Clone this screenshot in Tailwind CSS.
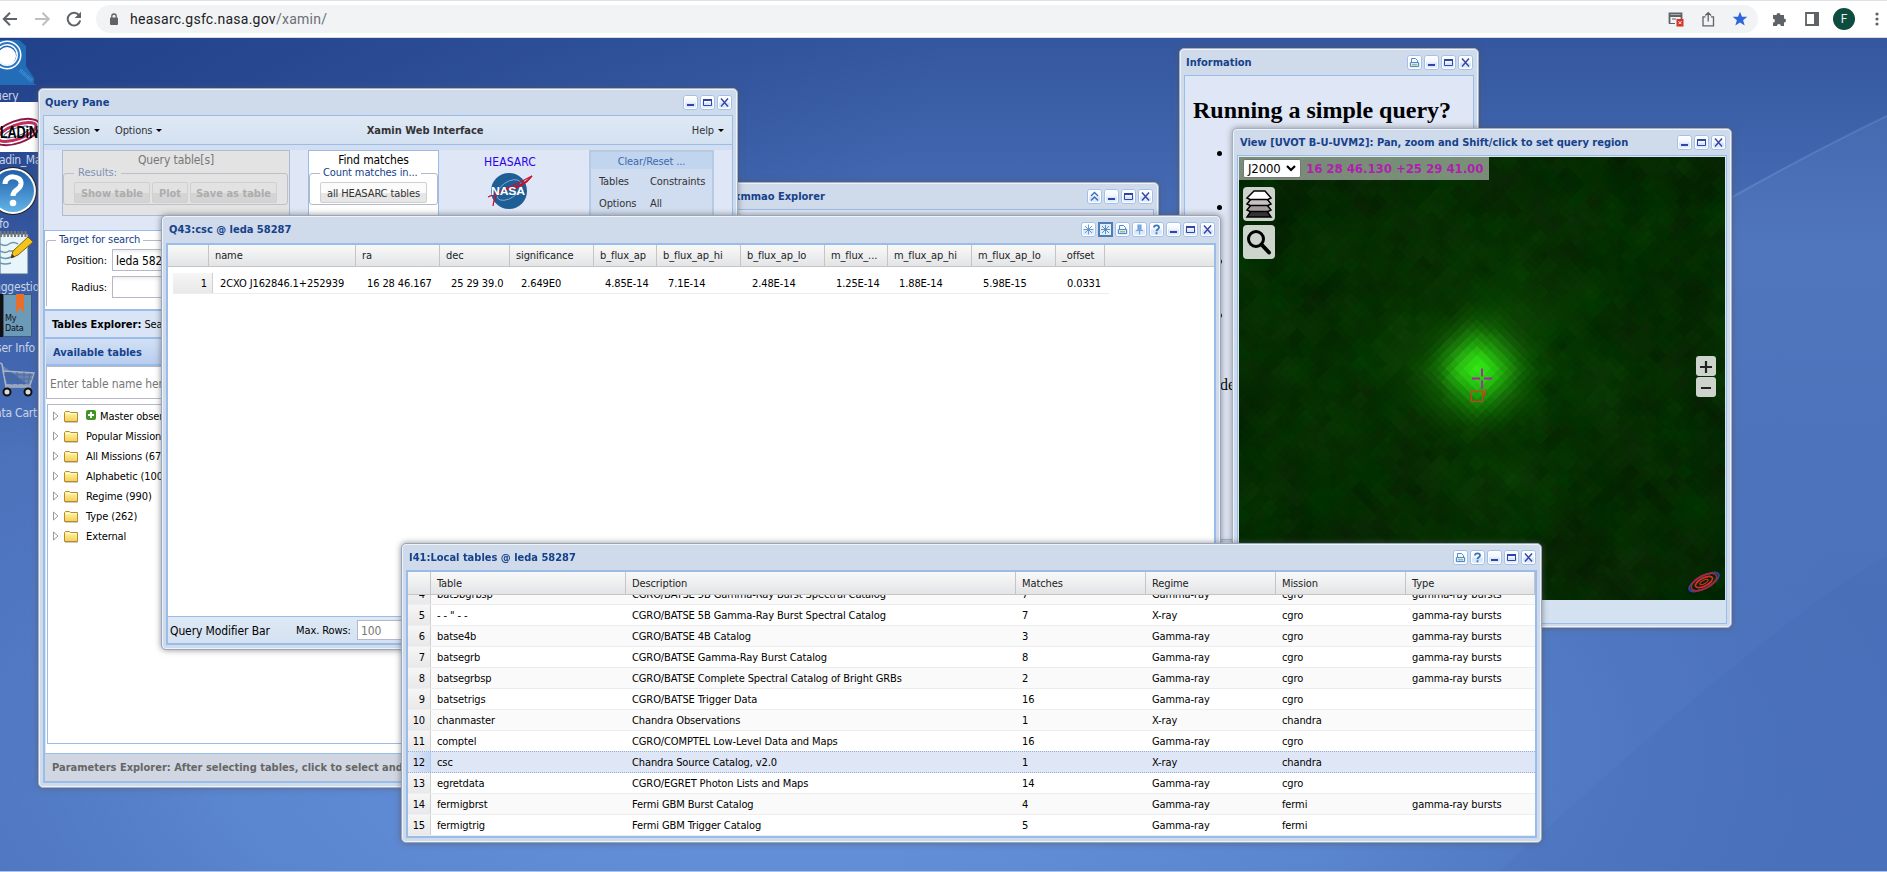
<!DOCTYPE html>
<html lang="en">
<head>
<meta charset="utf-8">
<title>Xamin</title>
<script src="https://cdn.jsdelivr.net/npm/@tailwindcss/browser@4"></script>
</head>
<body class="w-[1887px] h-[872px] overflow-hidden relative font-['DejaVu_Sans_Condensed','DejaVu_Sans',sans-serif] text-[11px] leading-[14px] tracking-[-0.11px] text-black whitespace-nowrap">
<svg class="absolute w-0 h-0">
  <linearGradient id="bt" x1="0" y1="0" x2="0" y2="1"><stop offset="0" stop-color="#fff"/><stop offset=".45" stop-color="#f2f7fe"/><stop offset=".6" stop-color="#d3e4fa"/><stop offset="1" stop-color="#eaf3ff"/></linearGradient>
  <linearGradient id="fg" x1="0" y1="0" x2="0" y2="1"><stop offset="0" stop-color="#fff7a8"/><stop offset="1" stop-color="#f3cf58"/></linearGradient>
  <linearGradient id="ig" x1="0" y1="0" x2="0" y2="1"><stop offset="0" stop-color="#1d5ea8"/><stop offset="1" stop-color="#63b3e8"/></linearGradient>
  <symbol id="box" viewBox="0 0 15 15"><rect x=".5" y=".5" width="14" height="14" rx="2.5" fill="url(#bt)" stroke="#a3c0ea"/><rect x="1.5" y="1.5" width="12" height="12" rx="1.5" fill="none" stroke="#fff"/></symbol>
  <symbol id="min" viewBox="0 0 15 15"><use href="#box"/><path d="M4 10h7" stroke="#3343a8" stroke-width="2"/></symbol>
  <symbol id="max" viewBox="0 0 15 15"><use href="#box"/><path d="M3.500 4.500h8v6h-8z" fill="none" stroke="#3343a8"/><path d="M3 5h9" stroke="#3343a8" stroke-width="2"/></symbol>
  <symbol id="close" viewBox="0 0 15 15"><use href="#box"/><path d="M4 3.500l7 8M11 3.500l-7 8" stroke="#3343a8" stroke-width="1.400"/></symbol>
  <symbol id="help" viewBox="0 0 15 15"><use href="#box"/><path d="M5 5.600c0-3 5-3 5 0 0 1.700-2.500 1.700-2.500 3.700M7.500 10.300v1.900" fill="none" stroke="#3a74b4" stroke-width="1.800"/></symbol>
  <symbol id="print" viewBox="0 0 15 15"><use href="#box"/><path d="M4.500 7V3.500h4l2 2V7M3.500 7.500h8v4h-8z" fill="none" stroke="#5a86cc"/><path d="M5 9.700h5" stroke="#8fc96a" stroke-width="1.500"/></symbol>
  <symbol id="pin" viewBox="0 0 15 15"><use href="#box"/><path d="M6 3h3v5H6zM4 8.500h7M7.500 9v3.500" fill="#7aa5dd" stroke="#7aa5dd" stroke-width="1.200"/></symbol>
  <symbol id="burst" viewBox="0 0 15 15"><use href="#box"/><path d="M7.500 2.500v10M2.500 7.500h10M4 4l7 7M11 4l-7 7" stroke="#5c93c6" stroke-width=".9"/></symbol>
  <symbol id="burstOn" viewBox="0 0 15 15"><rect x="1" y="1" width="13" height="13" fill="#e3eefb" stroke="#4d7fb5" stroke-width="2"/><path d="M7.500 3v9M3 7.500h9M4 4l7 7M11 4l-7 7" stroke="#4d86bc" stroke-width=".9"/></symbol>
  <symbol id="up" viewBox="0 0 15 15"><use href="#box"/><path d="M4 7l3.500-3.500L11 7M4 11.500L7.500 8l3.500 3.500" fill="none" stroke="#3a6eb5" stroke-width="1.400"/></symbol>
  <symbol id="folder" viewBox="0 0 15 13"><path d="M.5 11.500V2.500l1-1h4l1 1h7v9z" fill="url(#fg)" stroke="#b98a2c"/><path d="M1.500 3.700h11" stroke="#fffbd8"/><path d="M1 12.500h13" stroke="#999" stroke-opacity=".5"/></symbol>
  <symbol id="exp" viewBox="0 0 6 10"><path d="M.5 1v8l4.500-4z" fill="#fff" stroke="#999"/></symbol>
</svg>

<!-- browser toolbar -->
<header class="h-[38px] bg-white border-t border-t-[#dee1e6] border-b border-b-[#d5d9e2] flex items-center font-[Roboto,sans-serif] tracking-normal">
  <svg class="w-[16px] h-[16px] ml-[2px] shrink-0" viewBox="0 0 16 16" fill="none" stroke="#5f6368" stroke-width="2"><path d="M15 8H2.500M8 1.800L1.800 8 8 14.200"/></svg>
  <svg class="w-[16px] h-[16px] ml-[17px] shrink-0" viewBox="0 0 16 16" fill="none" stroke="#bdbfc2" stroke-width="2"><path d="M0 8h13M7.500 1.800L13.700 8l-6.200 6.200"/></svg>
  <svg class="w-[16px] h-[16px] ml-[15px] shrink-0" viewBox="0 0 16 16"><path d="M13 4.200A6.300 6.300 0 1 0 14.200 9.500" fill="none" stroke="#5f6368" stroke-width="2"/><path d="M15 .8v6.300H8.700z" fill="#5f6368"/></svg>
  <div class="ml-[14px] w-[1662px] h-[28px] rounded-full bg-[#f1f3f4] flex items-center shrink-0">
    <svg class="w-[10px] h-[12px] ml-[13px]" viewBox="0 0 10 12"><rect x="1" y="4.500" width="8" height="7.500" rx="1" fill="#5f6368"/><path d="M2.800 5V3.200a2.200 2.200 0 0 1 4.400 0V5" fill="none" stroke="#5f6368" stroke-width="1.300"/></svg>
    <span class="ml-[11px] text-[14px] tracking-[0.26px] text-[#202124]">heasarc.gsfc.nasa.gov<span class="text-[#6b6f74]">/xamin/</span></span>
    <svg class="w-[16px] h-[16px] ml-auto" viewBox="0 0 16 16"><path d="M1.500 12.500V2.500h12v6M1 5h13" fill="none" stroke="#5f6368" stroke-width="1.800"/><path d="M4 8h4M1 12.500h6" stroke="#5f6368" stroke-width="1.200"/><rect x="8.500" y="8" width="7" height="7.500" fill="#d93025"/><path d="M10.500 10.200l3 3M13.500 10.200l-3 3" stroke="#fff"/></svg>
    <svg class="w-[16px] h-[16px] ml-[16px]" viewBox="0 0 16 16" fill="none" stroke="#5f6368" stroke-width="1.300"><path d="M5.500 5.800H3v9h10.500v-9H11M8.200 10.500V2M5.300 4.500l2.900-2.900 2.900 2.900"/></svg>
    <svg class="w-[16px] h-[16px] ml-[16px] mr-[10px]" viewBox="0 0 16 16"><path d="M8 .8l2 5h5.300l-4.200 3.400 1.600 5.400L8 11.500l-4.700 3.100 1.600-5.400L.7 5.800H6z" fill="#2b66dc"/></svg>
  </div>
  <svg class="w-[16px] h-[16px] ml-[14px] shrink-0" viewBox="0 0 16 16"><path d="M1 4h3.500a2 2 0 1 1 4 0H12v3.600a2 2 0 1 1 0 4V15H8.800a1.900 1.900 0 1 0-3.800 0H1v-3.400a1.900 1.900 0 1 0 0-3.800z" fill="#5f6368"/></svg>
  <svg class="w-[14px] h-[14px] ml-[17px] shrink-0" viewBox="0 0 14 14"><path d="M1 1h12v12H1z" fill="#fff" stroke="#5f6368" stroke-width="1.800"/><path d="M9 0h5v14H9z" fill="#5f6368"/></svg>
  <div class="ml-[14px] size-[22px] rounded-full bg-[#0f4c40] text-[#e8f0ee] text-[12px] flex items-center justify-center shrink-0">F</div>
  <svg class="w-[4px] h-[14px] ml-[20px] shrink-0" viewBox="0 0 4 14" fill="#5f6368"><circle cx="2" cy="2" r="1.600"/><circle cx="2" cy="7" r="1.600"/><circle cx="2" cy="12" r="1.600"/></svg>
</header>

<!-- desktop -->
<main class="relative h-[834px] overflow-hidden border-b border-[#a9c4ee] bg-[#4a70b8]">
  <svg class="absolute inset-0 w-full h-full" viewBox="0 0 1887 834" preserveAspectRatio="none">
    <defs>
      <linearGradient id="d1" x1="0" y1="0" x2="0" y2="1"><stop offset="0" stop-color="#34579f"/><stop offset=".25" stop-color="#4a70b9"/><stop offset="1" stop-color="#4c73bd"/></linearGradient>
      <radialGradient id="d2" cx=".42" cy=".85" r=".62"><stop offset="0" stop-color="#6a96df"/><stop offset=".5" stop-color="#5f8bd5" stop-opacity=".75"/><stop offset="1" stop-color="#4a70b9" stop-opacity="0"/></radialGradient>
      <radialGradient id="d3" cx="0" cy="0" r=".5"><stop offset="0" stop-color="#21418a"/><stop offset="1" stop-color="#21418a" stop-opacity="0"/></radialGradient>
      <linearGradient id="d4" x1="0" y1="0" x2="0" y2="1"><stop offset="0" stop-color="#8fb0ea" stop-opacity=".12"/><stop offset="1" stop-color="#8fb0ea" stop-opacity="0"/></linearGradient>
    </defs>
    <rect width="1887" height="834" fill="url(#d1)"/><rect width="1887" height="834" fill="url(#d2)"/><rect width="1887" height="834" fill="url(#d3)"/>
    <path d="M1887 78Q1800 120 1700 175V560H1887z" fill="url(#d4)"/>
    <path d="M1887 78Q1800 120 1700 178" fill="none" stroke="#7d9fdc" stroke-opacity=".3" stroke-width="2"/>
    <path d="M1887 520Q1800 560 1500 834H1887z" fill="#2f559f" fill-opacity=".07"/>
  </svg>

  <!-- launchers -->
  <nav class="relative w-[39px] overflow-hidden flex flex-col text-[12px] leading-[16px] tracking-[-0.2px] text-[#c9d4e6]">
    <svg class="w-[39px] h-[50px] shrink-0" viewBox="0 0 39 50"><path d="M0 2h19l7 6v20l8 12v6h2v1H0z" fill="#226cb8"/><path d="M20 32l12 11" stroke="#3f8ad4" stroke-width="4" stroke-dasharray="1 .6"/><circle cx="7" cy="17" r="12" fill="#1d63b0" stroke="#fff" stroke-width="5"/><circle cx="7" cy="18" r="9" fill="#fff"/><circle cx="7" cy="17" r="12" fill="none" stroke="#2b78c6" stroke-width="2"/></svg>
    <span class="h-[14px] ml-[-5px]">uery</span>
    <svg class="w-[39px] h-[50px] shrink-0" viewBox="0 0 39 50"><path d="M0 0h39v50H0z" fill="#fff"/><g fill="none" transform="rotate(-20 17 30)"><ellipse cx="17" cy="30" rx="24" ry="11" stroke="#8c1848" stroke-width="2"/><ellipse cx="17" cy="30" rx="20" ry="7" stroke="#c0305a" stroke-width="3"/><ellipse cx="17" cy="30" rx="14" ry="4" stroke="#4a63a8"/></g><text x="0" y="36" font-family="Liberation Sans" font-weight="bold" font-size="16" textLength="38" lengthAdjust="spacingAndGlyphs">LADiN</text></svg>
    <span class="h-[14px] ml-[-1px] tracking-[-0.4px]">adin_Ma</span>
    <svg class="w-[39px] h-[50px] shrink-0" viewBox="0 0 39 50"><circle cx="13" cy="25" r="24" fill="#222"/><circle cx="13" cy="25" r="23" fill="#fff"/><circle cx="13" cy="25" r="21" fill="url(#ig)"/><path d="M5 18c0-10 17-9 16 0-1 7-8 5-8 12" fill="none" stroke="#fff" stroke-width="5"/><circle cx="13" cy="37" r="3.300" fill="#fff"/></svg>
    <span class="h-[13px] ml-[-1px]">fo</span>
    <svg class="w-[39px] h-[50px] shrink-0" viewBox="0 0 39 50"><path d="M0 5h28v40H0z" fill="#e8f6fb" stroke="#4c6b85"/><path d="M0 5h28" stroke="#777" stroke-width="6" stroke-dasharray="2 1.500"/><path d="M0 15q5 3 9 0t9 0M0 22q5 3 9 0h7M0 28q5 3 11 0M0 34q5 2 11 0" fill="none" stroke="#6b95ad" stroke-width="1.500"/><path d="M11 29l2-7L28 8l5 5-15 13z" fill="#f4c61c" stroke="#8b5a12"/><path d="M11 29l1-4 3 3z" fill="#333"/></svg>
    <span class="h-[14px] ml-[-6px]">uggestio</span>
    <svg class="w-[39px] h-[46px] shrink-0" viewBox="0 0 39 46"><path d="M0 1h3v43H0z" fill="#111"/><path d="M3.500 1.500h28v42h-28z" fill="#6c9ab9" stroke="#3c5c73"/><path d="M16 1h8v19l-4-5-4 5z" fill="#e6702b"/><g font-family="DejaVu Sans Condensed" font-size="9" fill="#111"><text x="5" y="28">My</text><text x="5" y="38">Data</text></g></svg>
    <span class="h-[20px] pt-[1px] ml-[-4px]">ser Info</span>
    <svg class="w-[39px] h-[42px] shrink-0 mt-[-1px]" viewBox="0 0 39 42"><path d="M-2 4l4 2 4 23h25M3 13l31 2-4 12H6z" fill="#7f97bb" fill-opacity=".6" stroke="#a9b4c2" stroke-width="1.500"/><path d="M4 17h29M5 21h27M10 14l2 13M17 14l1 13M24 14v13M30 15l-2 12" stroke="#4f678f" stroke-width=".8"/><circle cx="7" cy="34" r="3.500" fill="#ddd" stroke="#111" stroke-width="2"/><circle cx="28" cy="34" r="3.500" fill="#ddd" stroke="#111" stroke-width="2"/></svg>
    <span class="pt-[5px] ml-[-5px]">ata Cart</span>
  </nav>

  <!-- Information -->
  <section class="absolute left-[1179px] top-[10px] w-[300px] h-[496px] rounded-[5px] border border-[#a3b0c6] bg-[#cfdaea] shadow-[inset_0_0_0_1px_#eef2f9,0_0_6px_#55555599] px-[4px] pb-[3px] flex flex-col">
    <h2 class="h-[26px] pl-[2px] pr-[1px] flex items-center gap-[2px] font-bold tracking-normal text-[#15428b]"><span class="mr-auto pt-[2px]">Information</span>
      <svg class="size-[15px]"><use href="#print"/></svg><svg class="size-[15px]"><use href="#min"/></svg><svg class="size-[15px]"><use href="#max"/></svg><svg class="size-[15px]"><use href="#close"/></svg></h2>
    <div class="flex-1 border border-[#99bce8] bg-[#dfe6f5] pl-[8px] font-['Liberation_Serif',serif] text-[16px] leading-[18px] tracking-normal">
      <div class="mt-[21px] mb-[19px] text-[24px] leading-[27px] font-bold">Running a simple query?</div>
      <ul class="pl-[24px] flex flex-col"><li class="h-[54px] pt-[8px]"><i class="block size-[5px] rounded-full bg-black"></i></li><li class="h-[54px] pt-[8px]"><i class="block size-[5px] rounded-full bg-black"></i></li><li class="h-[54px] pt-[8px]"><i class="block size-[5px] rounded-full bg-black"></i></li><li class="h-[54px] pt-[8px]"><i class="block size-[5px] rounded-full bg-black"></i></li></ul>
      <div class="pl-[27px] pt-[17px]">de</div>
    </div>
  </section>

  <!-- xmmao Explorer -->
  <section class="absolute left-[640px] top-[144px] w-[519px] h-[120px] rounded-[5px] border border-[#a3b0c6] bg-[#cfdaea] shadow-[inset_0_0_0_1px_#eef2f9,0_0_6px_#55555599] px-[4px] pb-[3px] flex flex-col">
    <h2 class="h-[26px] pl-[89px] pr-[1px] flex items-center gap-[2px] font-bold tracking-normal text-[#15428b]"><span class="mr-auto pt-[2px]">xmmao Explorer</span>
      <svg class="size-[15px]"><use href="#up"/></svg><svg class="size-[15px]"><use href="#min"/></svg><svg class="size-[15px]"><use href="#max"/></svg><svg class="size-[15px]"><use href="#close"/></svg></h2>
    <div class="flex-1 border border-[#99bce8] bg-[#dfe6f5]"></div>
  </section>

  <!-- Query Pane -->
  <section class="absolute left-[38px] top-[50px] w-[700px] h-[700px] rounded-[5px] border border-[#a3b0c6] bg-[#cfdaea] shadow-[inset_0_0_0_1px_#eef2f9,0_0_6px_#55555599] px-[4px] pb-[4px] flex flex-col">
    <h2 class="h-[26px] pl-[2px] pr-[1px] flex items-center gap-[2px] font-bold tracking-normal text-[#15428b]"><span class="mr-auto pt-[2px]">Query Pane</span>
      <svg class="size-[15px]"><use href="#min"/></svg><svg class="size-[15px]"><use href="#max"/></svg><svg class="size-[15px]"><use href="#close"/></svg></h2>
    <div class="flex-1 border border-[#99bce8] bg-[#dfe6f5] flex flex-col">
      <div class="h-[29px] shrink-0 border-b border-[#99bce8] bg-gradient-to-b from-[#dfe9f5] to-[#d3e1f1] pl-[9px] pr-[8px] pt-[1px] flex items-center text-[#333]">
        <span>Session</span><i class="ml-[4px] border-x-[3px] border-x-transparent border-t-[3px] border-t-black"></i>
        <span class="ml-[15px]">Options</span><i class="ml-[4px] border-x-[3px] border-x-transparent border-t-[3px] border-t-black"></i>
        <b class="mx-auto pr-[4px] tracking-normal">Xamin Web Interface</b><span>Help</span><i class="ml-[4px] border-x-[3px] border-x-transparent border-t-[3px] border-t-black"></i>
      </div>
      <div class="h-[86px] shrink-0 border-b border-[#99bce8] border-t-[5px] border-t-[#d3dff0] pl-[18px] flex">
        <div class="w-[228px] h-[66px] border border-[#a9bcd6] bg-[#e3e3e3] flex flex-col text-[#777]">
          <div class="text-center pt-[1px] h-[22px] leading-[16px] text-[12px]">Query table[s]</div>
          <div class="relative h-[32px] mr-px border border-[#bfbfc9] rounded-[3px] flex gap-[2px] pl-[10px] pt-[8px] font-bold tracking-normal text-[#adadad]">
            <span class="absolute left-[10px] top-[-8px] px-[4px] bg-[#e3e3e3] font-normal text-[#7f90b5]">Results:</span>
            <span class="w-[76px] h-[21px] leading-[21px] text-center rounded-[2px] border border-[#d0d0d0] bg-gradient-to-b from-[#e2e2e2] from-50% to-[#d4d4d4] to-50%">Show table</span>
            <span class="w-[36px] h-[21px] leading-[21px] text-center rounded-[2px] border border-[#d0d0d0] bg-gradient-to-b from-[#e2e2e2] from-50% to-[#d4d4d4] to-50%">Plot</span>
            <span class="w-[87px] h-[21px] leading-[21px] text-center rounded-[2px] border border-[#d0d0d0] bg-gradient-to-b from-[#e2e2e2] from-50% to-[#d4d4d4] to-50%">Save as table</span>
          </div>
        </div>
        <div class="ml-[18px] w-[131px] h-[66px] border border-[#99bce8] bg-white flex flex-col">
          <div class="text-center pt-[1px] h-[22px] leading-[16px] text-[12px]">Find matches</div>
          <div class="relative h-[32px] border border-[#b5b8c8] rounded-[3px] pl-[10px] pt-[8px]">
            <span class="absolute left-[10px] top-[-8px] px-[3px] bg-white text-[#15428b]">Count matches in...</span>
            <span class="block w-[107px] h-[21px] leading-[21px] text-center text-[#333] rounded-[2px] border border-[#d0d0d0] bg-gradient-to-b from-[#fbfbfb] from-50% to-[#e6e6e6] to-50%">all HEASARC tables</span>
          </div>
        </div>
        <div class="w-[150px] flex flex-col items-center pr-[8px]">
          <span class="pt-[4px] leading-[16px] text-[12px] tracking-[0.1px] text-[#2a00f0]">HEASARC</span>
          <svg class="w-[46px] h-[36px] mt-[3px]" viewBox="0 0 46 36"><circle cx="22" cy="18" r="18" fill="#1d5e96"/><ellipse cx="22" cy="17" rx="14" ry="8" transform="rotate(-35 22 17)" fill="none" stroke="#8fb4d4" stroke-width=".8"/><path d="M1 24Q18 17 45 3 36 15 22 16T6 33" fill="none" stroke="#c8102e" stroke-width="1.300"/><path d="M45 3Q36 16 18 17q14-3 27-14z" fill="#c8102e"/><text x="4" y="22" font-family="Liberation Sans" font-weight="bold" font-size="11" fill="#fff" textLength="34" lengthAdjust="spacingAndGlyphs">NASA</text></svg>
        </div>
        <div class="w-[125px] h-[76px] border-2 border-[#b5cbe3] bg-[#d0dcef] text-[#333]">
          <div class="h-[17px] bg-[#c1d5ee] text-center text-[#3e68b0] leading-[19px]">Clear/Reset ...</div>
          <div class="grid grid-cols-[51px_1fr] pl-[8px] pt-[6px] gap-y-[8px]"><span>Tables</span><span>Constraints</span><span>Options</span><span>All</span></div>
        </div>
      </div>
      <div class="flex-1 border-l border-[#99bce8] flex flex-col">
        <div class="h-[78px] shrink-0 bg-white pt-[9px]">
          <div class="relative h-[66px] ml-px border-t border-l border-[#b5b8c8] rounded-tl-[3px] pt-[8px] flex flex-col gap-[5px]">
            <span class="absolute left-[9px] top-[-8px] px-[3px] bg-white text-[#15428b]">Target for search</span>
            <div class="flex items-center"><span class="w-[60px] pt-[2px] text-right">Position:</span><span class="ml-[5px] w-[400px] h-[22px] border border-[#b5b8c8] bg-gradient-to-b from-[#eee] to-white to-20% pl-[3px] leading-[22px] text-[12px]">leda 58287</span></div>
            <div class="flex items-center"><span class="w-[60px] pt-[2px] text-right">Radius:</span><span class="ml-[5px] w-[400px] h-[22px] border border-[#b5b8c8] bg-gradient-to-b from-[#eee] to-white to-20%"></span></div>
          </div>
        </div>
        <div class="h-[30px] shrink-0 border-y-2 border-[#99bce8] bg-[#d9e5f7] pl-[7px] leading-[28px]"><b class="tracking-normal">Tables Explorer:</b> Search for tables</div>
        <div class="h-[27px] shrink-0 border-b-2 border-[#99bce8] ml-px bg-gradient-to-b from-[#d2e0f5] via-[#c6d8f2] via-45% to-[#b9cdf0] pl-[7px] leading-[27px] font-bold tracking-normal text-[#15428b]">Available tables</div>
        <div class="flex-1 ml-px bg-white flex flex-col">
          <div class="h-[33px] shrink-0 border border-[#b5b8c8] pl-[3px] leading-[35px] text-[12px] text-[#777]">Enter table name here</div>
          <div class="mt-[5px] ml-px flex-1 border-y border-[#99bce8] border-t-[#b5b8c8] border-l border-l-[#99bce8] pl-[4px] pt-px" id="tree"></div>
          <div class="h-[9px] shrink-0"></div>
        </div>
        <div class="h-[29px] shrink-0 border-y border-[#99bce8] bg-[#d0d7e3] pl-[7px] leading-[27px] font-bold tracking-normal text-[#666]">Parameters Explorer: After selecting tables, click to select and apply constraints</div>
      </div>
    </div>
  </section>

  <!-- View -->
  <section class="absolute left-[1232px] top-[90px] w-[500px] h-[500px] rounded-[5px] border border-[#a3b0c6] bg-[#cfdaea] shadow-[inset_0_0_0_1px_#eef2f9,0_0_6px_#55555599] px-[4px] pb-[3px] flex flex-col">
    <h2 class="h-[26px] pl-[3px] pr-[1px] flex items-center gap-[2px] font-bold tracking-normal text-[#15428b]"><span class="mr-auto pt-[2px]">View [UVOT B-U-UVM2]: Pan, zoom and Shift/click to set query region</span>
      <svg class="size-[15px]"><use href="#min"/></svg><svg class="size-[15px]"><use href="#max"/></svg><svg class="size-[15px]"><use href="#close"/></svg></h2>
    <div class="flex-1 border border-[#99bce8] bg-gradient-to-b from-[#dfe9f5] to-[#d3e1f1]">
      <div class="relative m-px w-[486px] h-[443px]">
        <canvas id="sky" width="486" height="443" class="block"></canvas>
        <div class="absolute left-0 top-0 w-[250px] h-[23px] bg-[#c8d0c8]/60 flex items-center pl-[4px]">
          <span class="w-[58px] h-[19px] rounded-[2px] border border-[#777] bg-white flex items-center pl-[4px] text-[13px]"><span class="w-[38px]">J2000</span><svg class="w-[10px] h-[7px]" viewBox="0 0 10 7"><path d="M1 1l4 4 4-4" fill="none" stroke="#000" stroke-width="2.200"/></svg></span>
          <b class="ml-[5px] text-[13px] tracking-normal text-[#b01eb0]">16 28 46.130 +25 29 41.00</b>
        </div>
        <svg class="absolute left-[4px] top-[30px] w-[32px] h-[34px]" viewBox="0 0 32 34"><rect width="32" height="34" rx="4" fill="#ccd4cc"/><g stroke="#000" stroke-width="1.500"><path d="M8 24h16l4 6H4z" fill="#333"/><path d="M8 18h16l4 5-3 1.500H7L4 23z" fill="#a49c9c"/><path d="M8 12h16l4 5-3 1.500H7L4 17z" fill="#c8c0c4"/><path d="M11 4h11l6 7-3 1.500H7L4 11z" fill="#fff"/></g></svg>
        <svg class="absolute left-[4px] top-[68px] w-[32px] h-[34px]" viewBox="0 0 32 34"><rect width="32" height="34" rx="4" fill="#ccd4cc"/><circle cx="13" cy="14" r="7.500" fill="none" stroke="#000" stroke-width="3"/><path d="M18.500 19.500l7.500 8" stroke="#000" stroke-width="4" stroke-linecap="round"/></svg>
        <svg class="absolute left-[457px] top-[199px] w-[20px] h-[42px]" viewBox="0 0 20 42"><rect width="20" height="20" rx="3" fill="#ccd4cc"/><rect y="21" width="20" height="20" rx="3" fill="#ccd4cc"/><path d="M4 11h12M10 5v12M5 32h10" stroke="#222" stroke-width="2.200"/></svg>
        <svg class="absolute left-[230px] top-[210px] w-[26px] h-[38px]" viewBox="0 0 26 38" fill="none"><path d="M3 11.500h8M15 11.500h8M13 1.500v8M13 13.500v8" stroke="#b01eb0" stroke-width="1.800"/><path d="M2.500 24h11v10.500h-11zM16.500 22v7" stroke="#e8302a" stroke-width="1.200"/></svg>
        <svg class="absolute left-[449px] top-[412px] w-[33px] h-[26px]" viewBox="0 0 33 26" fill="none"><g transform="rotate(-28 16 13)"><ellipse cx="16" cy="13" rx="16.500" ry="6" stroke="#2545a8" stroke-width="2"/><ellipse cx="16" cy="13" rx="14" ry="6.500" stroke="#b02434" stroke-width="1.700"/><ellipse cx="16" cy="13" rx="9.500" ry="4" stroke="#e02a2a" stroke-width="1.700"/><ellipse cx="16" cy="13" rx="4.500" ry="1.700" stroke="#e02a2a" stroke-width="1.200"/></g></svg>
      </div>
    </div>
  </section>

  <!-- Q43 -->
  <section class="absolute left-[161px] top-[177px] w-[1060px] h-[435px] rounded-[5px] border border-[#97a5bd] bg-[#cfdaea] shadow-[inset_0_0_0_1px_#eef2f9,0_0_6px_#555555aa] pl-[4px] pr-[4px] pb-[4px] flex flex-col">
    <h2 class="h-[27px] shrink-0 pl-[3px] pr-[1px] flex items-center gap-[2px] font-bold tracking-normal text-[#15428b]"><span class="mr-auto pt-[1px]">Q43:csc @ leda 58287</span>
      <svg class="size-[15px]"><use href="#burst"/></svg><svg class="size-[15px]"><use href="#burstOn"/></svg><svg class="size-[15px]"><use href="#print"/></svg><svg class="size-[15px]"><use href="#pin"/></svg><svg class="size-[15px]"><use href="#help"/></svg><svg class="size-[15px]"><use href="#min"/></svg><svg class="size-[15px]"><use href="#max"/></svg><svg class="size-[15px]"><use href="#close"/></svg></h2>
    <div class="flex-1 border-2 border-[#99bce8] bg-white flex flex-col">
      <div class="h-[22px] shrink-0 flex border-b border-[#c5c5c5] bg-gradient-to-b from-[#f9f9f9] to-[#e3e4e6] leading-[22px] text-[#222]" id="qhead"></div>
      <div class="mt-[6px] ml-[5px] w-[936px] h-[21px] shrink-0 border-b border-[#ededed] flex leading-[22px]" id="qrow"></div>
      <div class="mt-auto h-[27px] shrink-0 border-t border-[#99bce8] bg-gradient-to-b from-[#dfe9f5] to-[#d3e1f1] flex items-center pl-[2px]">
        <span class="text-[12px] w-[126px] pt-[2px]">Query Modifier Bar</span><span class="w-[61px] pt-[2px]">Max. Rows:</span><span class="w-[120px] h-[20px] border border-[#b5b8c8] bg-white pl-[3px] leading-[20px] text-[12px] text-[#777]">100</span>
      </div>
    </div>
  </section>

  <!-- I41 -->
  <section class="absolute left-[401px] top-[505px] w-[1141px] h-[300px] rounded-[5px] border border-[#97a5bd] bg-[#cfdaea] shadow-[inset_0_0_0_1px_#eef2f9,0_0_6px_#555555aa] px-[4px] pb-[4px] flex flex-col">
    <h2 class="h-[26px] shrink-0 pl-[3px] pr-[1px] flex items-center gap-[2px] font-bold tracking-normal text-[#15428b]"><span class="mr-auto pt-[2px]">I41:Local tables @ leda 58287</span>
      <svg class="size-[15px]"><use href="#print"/></svg><svg class="size-[15px]"><use href="#help"/></svg><svg class="size-[15px]"><use href="#min"/></svg><svg class="size-[15px]"><use href="#max"/></svg><svg class="size-[15px]"><use href="#close"/></svg></h2>
    <div class="flex-1 border-2 border-[#99bce8] bg-white flex flex-col overflow-hidden">
      <div class="h-[23px] shrink-0 grid grid-cols-[23px_195px_390px_130px_130px_130px_1fr] border-b border-[#c5c5c5] bg-gradient-to-b from-[#f9f9f9] to-[#e3e4e6] leading-[23px] text-[#222] *:border-r *:border-[#c5c5c5] *:pl-[6px]"><span></span><span>Table</span><span>Description</span><span>Matches</span><span>Regime</span><span>Mission</span><span>Type</span></div>
      <div class="flex-1 overflow-hidden"><div class="mt-[-11px]" id="rows"></div></div>
    </div>
  </section>
</main>

<script>
const $ = id => document.getElementById(id);
$('tree').innerHTML = ['Master observations','Popular Missions','All Missions (67)','Alphabetic (1004)','Regime (990)','Type (262)','External'].map((t, i) =>
  `<div class="h-[20px] flex items-center"><svg class="w-[6px] h-[10px] ml-px"><use href="#exp"/></svg><svg class="w-[15px] h-[13px] ml-[5px] mr-[7px]"><use href="#folder"/></svg>${i ? '' : '<svg class="size-[10px] mr-[4px] mb-[2px]" viewBox="0 0 10 10"><rect width="10" height="10" rx="2" fill="#3f9425"/><path d="M5 2v6M2 5h6" stroke="#fff" stroke-width="2"/></svg>'}<span class="pt-[2px]">${t}</span></div>`).join('');
const cols = [['',41,''],['name',147,'2CXO J162846.1+252939'],['ra',84,'16 28 46.167'],['dec',70,'25 29 39.0'],['significance',84,'2.649E0'],['b_flux_ap',63,'4.85E-14'],['b_flux_ap_hi',84,'7.1E-14'],['b_flux_ap_lo',84,'2.48E-14'],['m_flux_...',63,'1.25E-14'],['m_flux_ap_hi',84,'1.88E-14'],['m_flux_ap_lo',84,'5.98E-15'],['_offset',49,'0.0331']];
$('qhead').innerHTML = cols.map(c => `<span class="shrink-0 border-r border-[#c5c5c5] pl-[6px]" style="width:${c[1]}px">${c[0]}</span>`).join('');
$('qrow').innerHTML = cols.map((c, i) => i ? `<span class="shrink-0 pl-[6px]" style="width:${c[1]}px">${c[2]}</span>` : '<span class="shrink-0 w-[40px] mr-px pr-[5px] text-right border-r border-[#d0d0d0] bg-gradient-to-b from-[#f6f6f6] to-[#e9e8ea]">1</span>').join('');
const G = 'Gamma-ray', B = 'gamma-ray bursts';
const rows = [[4,'bat5bgrbsp','CGRO/BATSE 5B Gamma-Ray Burst Spectral Catalog',7,G,'cgro',B],[5,'- - " - -','CGRO/BATSE 5B Gamma-Ray Burst Spectral Catalog',7,'X-ray','cgro',B],[6,'batse4b','CGRO/BATSE 4B Catalog',3,G,'cgro',B],[7,'batsegrb','CGRO/BATSE Gamma-Ray Burst Catalog',8,G,'cgro',B],[8,'batsegrbsp','CGRO/BATSE Complete Spectral Catalog of Bright GRBs',2,G,'cgro',B],[9,'batsetrigs','CGRO/BATSE Trigger Data',16,G,'cgro',''],[10,'chanmaster','Chandra Observations',1,'X-ray','chandra',''],[11,'comptel','CGRO/COMPTEL Low-Level Data and Maps',16,G,'cgro',''],[12,'csc','Chandra Source Catalog, v2.0',1,'X-ray','chandra',''],[13,'egretdata','CGRO/EGRET Photon Lists and Maps',14,G,'cgro',''],[14,'fermigbrst','Fermi GBM Burst Catalog',4,G,'fermi',B],[15,'fermigtrig','Fermi GBM Trigger Catalog',5,G,'fermi','']];
$('rows').innerHTML = rows.map(r => {
  const on = r[0] === 12;
  const bg = on ? 'bg-[#dfe6f5] border-y border-dotted border-[#8fb0e4] mt-[-1px] h-[22px]' : r[0] % 2 ? 'bg-white border-b border-[#ededed] h-[21px]' : 'bg-[#fafafa] border-b border-[#ededed] h-[21px]';
  const g = on ? 'bg-gradient-to-r from-[#dfe6f5] to-[#c5d6f1] border-[#b3cbee]' : 'bg-gradient-to-b from-[#f6f6f6] to-[#e9e8ea] border-[#d0d0d0]';
  return `<div class="grid grid-cols-[23px_195px_390px_130px_130px_130px_1fr] grid-rows-[20px] leading-[22px] ${bg}"><span class="border-r pr-[5px] text-right ${g}">${r[0]}</span>${r.slice(1).map(c => `<span class="pl-[6px]">${c}</span>`).join('')}</div>`;
}).join('');

// sky image: diamond-shaped pixels of noise around a bright source
const cv = $('sky'), cx = cv.getContext('2d');
cx.fillStyle = '#052c00'; cx.fillRect(0, 0, 486, 443);
const rnd = (i, j, k) => { const s = Math.sin(i * 127.1 + j * 311.7 + k * 74.7) * 43758.5453; return s - Math.floor(s); };
const noise = (x, y, k) => { const i = Math.floor(x), j = Math.floor(y), u = x - i, v = y - j;
  return (rnd(i,j,k)*(1-u)+rnd(i+1,j,k)*u)*(1-v)+(rnd(i,j+1,k)*(1-u)+rnd(i+1,j+1,k)*u)*v; };
const h = 4.5;
for (let a = -60; a < 160; a++) for (let b = -110; b < 110; b++) {
  const x = (a + b) * h, y = (a - b) * h;
  if (x < -9 || y < -9 || x > 495 || y > 452) continue;
  const dx = x - 240, dy = y - 212, d = Math.hypot(dx, dy) * .75 + (Math.abs(dx) + Math.abs(dy)) * .21;
  const core = Math.exp(-d*d/1250), halo = Math.exp(-d/70);
  const n = noise(a/6, b/6, 1) * .4 + noise(a/3, b/3, 2) * .3 + rnd(a >> 1, b >> 1, 4) * .22 + rnd(a, b, 5) * .08 - .5;
  const n3 = noise(a/4, b/4, 3) * .6 + rnd(a >> 1, b >> 1, 6) * .4 - .5;
  const r = 5 + n3*12 + 36*core + 8*halo, g = 42 + n*32 + 148*core + 38*halo, bl = 1 + Math.max(0, n3)*12 + 18*core;
  cx.fillStyle = `rgb(${Math.max(0,r)|0},${g|0},${bl|0})`;
  cx.beginPath(); cx.moveTo(x, y-h-.6); cx.lineTo(x+h+.6, y); cx.lineTo(x, y+h+.6); cx.lineTo(x-h-.6, y); cx.fill();
}
</script>
</body>
</html>
